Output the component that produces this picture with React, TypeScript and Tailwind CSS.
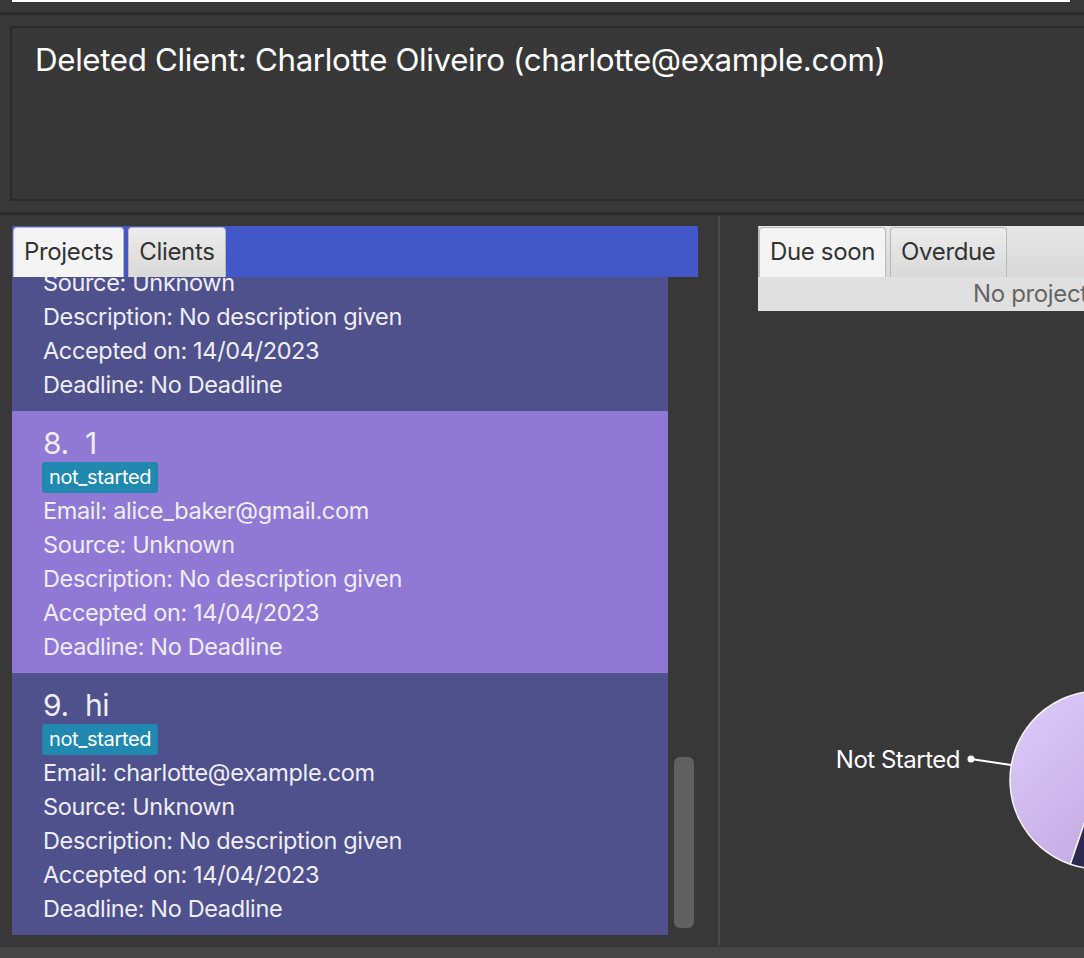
import React from 'react';

interface Project {
  index: number;
  name: string;
  email: string;
  selected?: boolean;
}

const projects: Project[] = [
  { index: 7, name: 'test', email: 'alice_baker@gmail.com' },
  { index: 8, name: '1', email: 'alice_baker@gmail.com', selected: true },
  { index: 9, name: 'hi', email: 'charlotte@example.com' },
];

function ProjectCard({ project }: { project: Project }) {
  return (
    <div
      className={`pl-[31px] pt-[14px] pb-[9px] text-[#eeedf6] ${
        project.selected ? 'bg-[#9079d4]' : 'bg-[#4e518b]'
      }`}
    >
      <div className="text-[30px] leading-[36px] whitespace-pre">
        {project.index}.  {project.name}
      </div>
      <div className="ml-[-1px] mt-[1px] h-[31px] w-fit rounded-[3px] bg-[#2189b0] px-[7px] text-[20px] leading-[31px] text-white">
        not_started
      </div>
      <div className="mt-[1px] text-[23.5px] leading-[34px]">
        <div>Email: {project.email}</div>
        <div>Source: Unknown</div>
        <div>Description: No description given</div>
        <div>Accepted on: 14/04/2023</div>
        <div>Deadline: No Deadline</div>
      </div>
    </div>
  );
}

function Tab({ label, selected }: { label: string; selected?: boolean }) {
  return (
    <div
      className={`h-[50px] rounded-t-[4px] border border-b-0 border-[#b8b8b8] px-[10px] text-[24px] leading-[48px] text-[#333333] ${
        selected ? 'bg-[#f4f4f4]' : 'bg-gradient-to-b from-[#ececec] to-[#d9d9d9]'
      }`}
    >
      {label}
    </div>
  );
}

function StatusPie() {
  // chart drawn in the right pane's local coordinates
  const cx = 379;
  const cy = 469;
  const r = 89;
  const a1 = (108.8 * Math.PI) / 180;
  const a0 = (20 * Math.PI) / 180;
  const p1 = [cx + r * Math.cos(a1), cy + r * Math.sin(a1)];
  const p0 = [cx + r * Math.cos(a0), cy + r * Math.sin(a0)];

  return (
    <svg width="364" height="634" className="block">
      <defs>
        <linearGradient id="lav" x1="0" y1="0" x2="1" y2="1">
          <stop offset="0%" stopColor="#dfcdfa" />
          <stop offset="100%" stopColor="#b99ddb" />
        </linearGradient>
      </defs>
      {/* not started slice */}
      <path
        d={`M ${cx} ${cy} L ${p1[0]} ${p1[1]} A ${r} ${r} 0 1 1 ${p0[0]} ${p0[1]} Z`}
        fill="url(#lav)"
        stroke="#f2f2f2"
        strokeWidth="1.5"
      />
      {/* in progress slice */}
      <path
        d={`M ${cx} ${cy} L ${p0[0]} ${p0[1]} A ${r} ${r} 0 0 1 ${p1[0]} ${p1[1]} Z`}
        fill="#2b2950"
        stroke="#f2f2f2"
        strokeWidth="1.5"
      />
      <line x1="251" y1="448" x2="291" y2="454" stroke="#ffffff" strokeWidth="2" />
      <circle cx="251" cy="448" r="3.5" fill="#ffffff" />
      <text
        x="240"
        y="457"
        textAnchor="end"
        fill="#ffffff"
        fontSize="24"
        letterSpacing="-0.5"
        fontFamily="Inter, sans-serif"
      >
        Not Started
      </text>
    </svg>
  );
}

export default function App() {
  return (
    <div
      className="flex h-[958px] w-[1084px] flex-col overflow-hidden bg-[#383838] tracking-[-0.022em]"
      style={{ fontFamily: 'Inter, "Noto Sans", sans-serif' }}
    >
      {/* command box edge */}
      <div className="ml-[12px] mr-[14px] h-[2px] shrink-0 bg-white" />
      <div className="h-[10px] shrink-0" />
      <div className="h-[3px] shrink-0 bg-[#2b2b2b]" />

      {/* result display */}
      <div className="shrink-0 pl-[10px] pt-[11px]">
        <div className="mr-[-10px] h-[175px] border-2 border-[#2b2b2b] bg-[#373737] pl-[23px] pt-[12px]">
          <div className="text-[31.3px] leading-[40px] text-white">
            Deleted Client: Charlotte Oliveiro (charlotte@example.com)
          </div>
        </div>
      </div>
      <div className="h-[11px] shrink-0" />
      <div className="h-[3px] shrink-0 bg-[#2b2b2b]" />

      {/* main split */}
      <div className="flex min-h-0 flex-1">
        {/* left: project list */}
        <div className="w-[718px] shrink-0 pl-[12px] pt-[11px]">
          <div className="w-[686px]">
            <div className="flex h-[51px] items-end gap-[4px] bg-[#4358c8] pl-[1px]">
              <Tab label="Projects" selected />
              <Tab label="Clients" />
            </div>
            <div className="flex h-[658px]">
              <div className="h-full w-[656px] overflow-hidden">
                <div className="mt-[-128px]">
                  {projects.map((p) => (
                    <ProjectCard key={p.index} project={p} />
                  ))}
                </div>
              </div>
              <div className="flex h-[651px] w-[30px] flex-col justify-end pl-[6px] pr-[4px]">
                <div className="h-[171px] rounded-[6px] bg-[#606060]" />
              </div>
            </div>
          </div>
        </div>

        <div className="mb-[2px] mt-[1px] w-[2px] shrink-0 bg-[#4b4b4b]" />

        {/* right: deadlines + chart */}
        <div className="flex min-w-0 flex-1 flex-col pt-[11px]">
          <div className="ml-[38px] w-[700px]">
            <div className="flex h-[51px] items-end gap-[4px] border-l border-[#bdbdbd] bg-gradient-to-b from-[#e6e6e6] to-[#d8d8d8]">
              <Tab label="Due soon" selected />
              <Tab label="Overdue" />
            </div>
            <div className="h-[34px] bg-[#e0e0e0] pl-[215px] text-[24px] leading-[34px] text-[#666666]">
              No projects due soon
            </div>
          </div>
          <StatusPie />
        </div>
      </div>

      {/* status bar */}
      <div className="h-[11px] shrink-0 bg-[#454545]" />
    </div>
  );
}
